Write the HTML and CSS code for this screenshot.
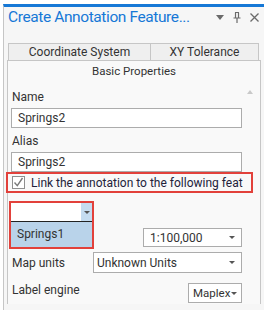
FILE: index.html
```html
<!DOCTYPE html>
<html lang="en">
<head>
    <meta charset="UTF-8">
    <title>Create Annotation Feature Class</title>
    <link rel="stylesheet" href="styles.css">
</head>
<body>
    <div class="pane">
        <!-- title bar -->
        <header class="title-bar">
            <span class="title">Create Annotation Feature...</span>
            <span class="title-tools">
                <svg width="8" height="5" viewBox="0 0 8 5"><path d="M0 0h8L4 5z" fill="#6a6a6a"/></svg>
                <svg width="8" height="11" viewBox="0 0 8 11"><path d="M2 0.5h4M2.5 0.5v5M5.5 0.5v5M0.5 6h7M4 6v5" stroke="#6a6a6a" stroke-width="1.2" fill="none"/></svg>
                <svg width="9" height="9" viewBox="0 0 9 9"><path d="M0.5 0.5l8 8M8.5 0.5l-8 8" stroke="#6a6a6a" stroke-width="1.3"/></svg>
            </span>
        </header>

        <!-- tabs -->
        <div class="tabs">
            <div class="tab tab-first">Coordinate System</div>
            <div class="tab">XY Tolerance</div>
        </div>

        <section class="panel">
            <div class="panel-head">Basic Properties</div>
            <div class="panel-body">
                <span class="scroll-up"></span>

                <div class="label">Name</div>
                <div class="textbox">Springs2</div>

                <div class="label label-gap">Alias</div>
                <div class="textbox">Springs2</div>

                <label class="check-row">
                    <span class="checkbox">
                        <svg width="11" height="11" viewBox="0 0 11 11"><path d="M1.5 5.5l2.8 3.2L9.5 1" stroke="#7a7a7a" stroke-width="1.4" fill="none"/></svg>
                    </span>
                    <span class="check-text">Link the annotation to the following feat</span>
                </label>

                <!-- opened feature class dropdown -->
                <div class="link-field">
                    <div class="popup">
                        <div class="popup-combo">
                            <span class="popup-btn"><i class="arrow"></i></span>
                        </div>
                        <div class="popup-item">Springs1</div>
                    </div>
                </div>

                <div class="row row-scale">
                    <span class="label"></span>
                    <div class="combo combo-scale">1:100,000<i class="arrow"></i></div>
                </div>

                <div class="row row-units">
                    <span class="label">Map units</span>
                    <div class="combo combo-units">Unknown Units<i class="arrow"></i></div>
                </div>

                <div class="row row-engine">
                    <span class="label">Label engine</span>
                    <div class="combo combo-engine">Maplex<i class="arrow"></i></div>
                </div>
            </div>
        </section>
    </div>
</body>
</html>
```

FILE: styles.css
```css
:root {
    --blue: #1678d6;
    --line: #c6c6c6;
    --red: #e2413b;
    --text: #333333;
}

body {
    margin: 0;
    background: #ffffff;
    font-family: Roboto, 'Noto Sans', sans-serif;
    font-size: 12px;
    color: var(--text);
    overflow: hidden;
}

.pane {
    margin: 4px 0 0 3px;
    height: 303px;
    border-top: 3px solid var(--blue);
    border-left: 1px solid var(--line);
    background: #f6f6f6;
}

/* title */
.title-bar {
    display: flex;
    align-items: center;
    height: 36px;
    padding: 0 0 0 4px;
}

.title {
    font-size: 15.5px;
    line-height: 20px;
    letter-spacing: -0.4px;
    color: var(--blue);
    margin-top: -16px;
    white-space: nowrap;
}

.title-tools {
    display: flex;
    align-items: center;
    gap: 9px;
    margin: -16px 0 0 auto;
    padding-right: 5px;
}

/* tabs */
.tabs {
    display: flex;
    margin-left: 4px;
    height: 17px;
}

.tab {
    width: 107px;
    border: 1px solid var(--line);
    border-left: none;
    border-bottom: none;
    background: #efefef;
    text-align: center;
    line-height: 16px;
}

.tab-first {
    width: 141px;
    border-left: 1px solid var(--line);
}

.panel {
    margin-left: 3px;
    width: 252px;
    height: 243px;
    border: 1px solid var(--line);
    border-bottom: none;
    background: #f9f9f9;
}

.panel-head {
    height: 20px;
    line-height: 20px;
    text-align: center;
    font-size: 11.5px;
}

.panel-body {
    position: relative;
    padding: 8px 0 0 3px;
}

.scroll-up {
    position: absolute;
    top: 9px;
    right: 7px;
    border: 3px solid transparent;
    border-top: none;
    border-bottom: 4px solid #c9c9c9;
}

.label {
    padding-left: 1px;
    line-height: 16px;
    white-space: nowrap;
}

.label-gap {
    margin-top: 5px;
}

.textbox {
    width: 223px;
    height: 18px;
    margin-top: 3px;
    padding-left: 6px;
    border: 1px solid #acacac;
    background: #ffffff;
    line-height: 18px;
}

/* highlighted checkbox row */
.check-row {
    display: flex;
    align-items: center;
    gap: 6px;
    width: 239px;
    height: 17px;
    margin-left: -5px;
    padding-left: 4px;
    border: 2px solid var(--red);
    white-space: nowrap;
}

.checkbox {
    display: flex;
    align-items: center;
    justify-content: center;
    width: 11px;
    height: 11px;
    border: 1px solid #8f8f8f;
    background: #ffffff;
}

.check-text {
    font-size: 12px;
    color: #22223a;
}

/* opened dropdown */
.link-field {
    height: 22px;
    margin: 8px 0 0 -2px;
}

.popup {
    position: relative;
    z-index: 1;
    width: 81px;
    border: 2px solid var(--red);
    background: #ffffff;
}

.popup-combo {
    display: flex;
    justify-content: flex-end;
    height: 18px;
    border-bottom: 1px solid #222222;
}

.popup-btn {
    display: flex;
    align-items: center;
    justify-content: center;
    width: 11px;
    background: #c5dcf0;
}

.popup-item {
    height: 25px;
    line-height: 25px;
    padding-left: 6px;
    background: #b9d3ea;
}

/* form rows */
.row {
    display: flex;
    align-items: center;
    justify-content: space-between;
    width: 231px;
}

.row-scale {
    margin-top: 5px;
}

.row-units {
    margin-top: 5px;
}

.row-engine {
    margin-top: 10px;
}

.row-engine .label {
    margin-top: -7px;
}

.combo {
    display: flex;
    align-items: center;
    height: 17px;
    padding-left: 6px;
    border: 1px solid #acacac;
    background: #ffffff;
    white-space: nowrap;
}

.combo-scale {
    width: 91px;
}

.combo-units {
    height: 19px;
    padding-left: 3px;
    width: 144px;
}

.combo-engine {
    height: 18px;
    padding-left: 4px;
    width: 48px;
    font-size: 11.5px;
}

.combo-engine .arrow {
    margin-right: 4px;
}

.arrow {
    display: block;
    margin: 0 6px 0 auto;
    border: 3px solid transparent;
    border-bottom: none;
    border-top: 3px solid #555555;
}

.popup-btn .arrow {
    margin: 0;
}
```
